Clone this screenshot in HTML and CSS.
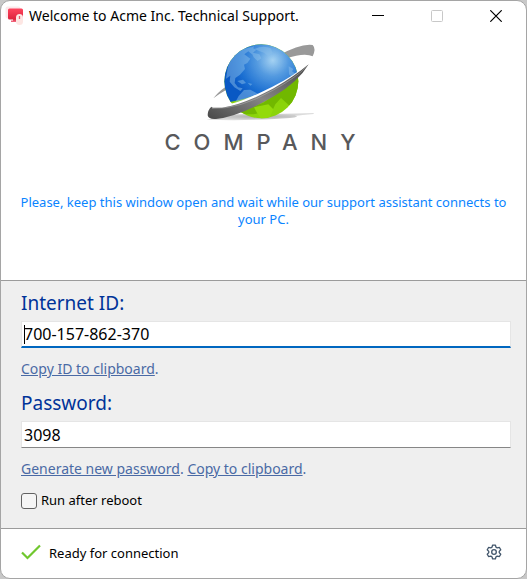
FILE: index.html
```html
<!DOCTYPE html>
<html lang="en">
<head>
<meta charset="utf-8">
<meta name="viewport" content="width=device-width, initial-scale=1">
<title>Welcome to Acme Inc. Technical Support.</title>
<link rel="stylesheet" href="styles.css">
</head>
<body>
<div class="window">
  <header class="titlebar">
    <svg class="app-icon" width="20" height="20" viewBox="0 0 20 20" aria-hidden="true">
      <defs><linearGradient id="screen" x1="0" y1="0" x2="0" y2="1"><stop offset="0" stop-color="#ff455e"/><stop offset="1" stop-color="#dc233c"/></linearGradient></defs>
      <rect x="0.5" y="0.5" width="15" height="12" rx="2" fill="#fbe9ec"/>
      <rect x="3" y="2.500" width="15" height="11" rx="1.500" fill="url(#screen)"/>
      <path d="M8 13h5v2H8z" fill="#e0304a"/>
      <rect x="6" y="14.500" width="8" height="1.500" fill="#f06078"/>
      <rect x="11" y="8" width="7" height="11" rx="3.500" fill="#fde6e3"/>
      <path d="M14.500 10v3" stroke="#e85a6c" stroke-width="1.300"/>
    </svg>
    <h1 class="title">Welcome to Acme Inc. Technical Support.</h1>
    <div class="window-buttons">
      <button type="button" aria-label="Minimize"><svg width="12" height="12" viewBox="0 0 12 12"><path d="M0 5.500h12" stroke="#000"/></svg></button>
      <button type="button" aria-label="Maximize" disabled><svg width="12" height="12" viewBox="0 0 12 12"><rect x="0.500" y="0.500" width="11" height="11" rx="1" fill="none" stroke="#c8c8c8"/></svg></button>
      <button type="button" aria-label="Close"><svg width="12" height="12" viewBox="0 0 12 12"><path d="M.3.300l11.400 11.400M11.700.300L.3 11.700" stroke="#000" stroke-width="1.200"/></svg></button>
    </div>
  </header>

  <section class="intro">
    <div class="brand">
      <svg class="globe" width="120" height="85" viewBox="0 0 360 255" aria-hidden="true">
        <defs>
          <radialGradient id="sea" gradientUnits="userSpaceOnUse" cx="218" cy="58" r="135"><stop offset="0" stop-color="#a5d2f2"/><stop offset=".35" stop-color="#559be0"/><stop offset=".75" stop-color="#1b6fd2"/><stop offset="1" stop-color="#0a58c4"/></radialGradient>
          <linearGradient id="band" x1="0" y1="1" x2="1" y2="0"><stop offset="0" stop-color="#484848"/><stop offset=".45" stop-color="#858585"/><stop offset="1" stop-color="#484848"/></linearGradient>
          <radialGradient id="shade"><stop offset="0" stop-color="#aaa"/><stop offset="1" stop-color="#ddd"/></radialGradient>
          <clipPath id="ball"><circle cx="184" cy="121" r="111"/></clipPath>
        </defs>
        <path d="M20 236Q90 215 180 220L341 216V219L285 224Q310 230 235 233Q130 240 20 236Z" fill="url(#shade)"/>
        <path d="M238 43Q300 7 338 12Q349 23 338 46Q314 34 256 53Z" fill="#999"/>
        <path d="M40 172Q53 154 77 137L78 147Q60 157 40 172Z" fill="#999"/>
        <g clip-path="url(#ball)">
          <path d="M60 0H310V255H60Z" fill="#8bd40a"/>
          <path d="M100 220L190 185L300 105V190L270 196L243 171L226 190L218 207L160 220Z" fill="#72b800"/>
          <path d="M162 199L205 190L220 205L210 228L185 236L173 219Z" fill="#93da0a"/>
          <path d="M60 0H310V85Q230 155 91 183H60Z" fill="url(#sea)"/>
          <g fill="#8cc0eb" opacity=".48">
            <path d="M83 81Q91 42 128 25L152 19L169 26L155 39L145 31L133 40L151 53L142 66L132 71L135 84L120 101L106 111L104 126L114 139L128 142L121 150L103 139L89 122L91 104L78 113Z"/>
            <path d="M164 24Q190 11 212 22L218 35L204 45L192 35L179 31Z"/>
            <path d="M145 23L162 16L158 27ZM154 34L178 40L184 52L173 60L161 49Z"/>
            <path d="M112 120L129 116L138 126L126 130ZM143 125L157 129L151 134ZM132 147L151 146L175 159L151 171L119 180L106 184L116 165Z"/>
            <path d="M266 76L280 84L276 91L288 99L281 112L267 100Z"/>
          </g>
        </g>
        <path d="M30 197Q88 199 174 158Q260 119 304 84L296 104Q212 170 100 199Q60 211 24 211Z" fill="#fff"/>
        <path d="M34 197Q36 202 66 200Q125 193 221 142Q282 107 326 70Q295 123 223 165Q120 226 48 234Q26 236 23 223Q23 207 34 197Z" fill="url(#band)"/>
        <path d="M36 202Q118 206 220 147Q288 110 321 76" fill="none" stroke="#bbb" stroke-width="2" opacity=".7"/>
      </svg>
      <div class="company">COMPANY</div>
    </div>
    <p class="message">Please, keep this window open and wait while our support assistant connects to your PC.</p>
  </section>

  <main class="panel">
    <label class="field-label" for="internet-id">Internet ID:</label>
    <input class="field active" id="internet-id" type="text" value="700-157-862-370" readonly>
    <p class="links"><a href="#copy-id">Copy ID to clipboard</a>.</p>
    <label class="field-label" for="password">Password:</label>
    <input class="field" id="password" type="text" value="3098" readonly>
    <p class="links"><a href="#generate">Generate new password</a>. <a href="#copy-password">Copy to clipboard</a>.</p>
    <label class="check" for="reboot"><input id="reboot" type="checkbox">Run after reboot</label>
  </main>

  <footer class="status">
    <svg width="20" height="16" viewBox="0 0 20 16" aria-hidden="true"><path d="M1 8.500L6.500 14L19 1.500" fill="none" stroke="#70c72e" stroke-width="2.200"/></svg>
    <span class="status-text">Ready for connection</span>
    <button class="settings" type="button" aria-label="Settings">
      <svg width="16" height="16" viewBox="0 0 18 18" fill="none" stroke="#42566b" stroke-width="1.500" stroke-linejoin="round"><path d="M7.500 1.200h3l.8 2.400 1.300.8 2.500-.5 1.500 2.600L14.900 8.300v1.400l1.700 1.800-1.500 2.600-2.500-.5-1.300.8-.8 2.400h-3l-.8-2.400-1.300-.8-2.500.5-1.500-2.600 1.700-1.800V8.300L1.400 6.500 2.900 3.900l2.500.5 1.300-.8z"/><circle cx="9" cy="9" r="2.600"/></svg>
    </button>
  </footer>
</div>
</body>
</html>
```
FILE: styles.css
```css
* { box-sizing: border-box; }

body {
  margin: 0;
  background: #c8c8c8;
  color: #000;
  font: 13px/17px "Noto Sans", "Liberation Sans", sans-serif;
}

.window {
  display: flex;
  flex-direction: column;
  min-height: 100vh;
  overflow: hidden;
  background: #fff;
  border: 1px solid #a5a5a5;
  border-radius: 10px;
}

button {
  display: grid;
  place-items: center;
  padding: 0;
  background: none;
  border: 0;
}

.titlebar {
  display: flex;
  align-items: center;
  height: 30px;
  padding: 0 1px 0 4px;
}

.title {
  margin: 0 0 0 4px;
  font: 14px/20px "Noto Sans", sans-serif;
  white-space: nowrap;
}

.window-buttons {
  display: flex;
  margin-left: auto;
}

.window-buttons button {
  width: 59px;
  height: 30px;
}

.intro {
  height: 249px;
  padding: 10px 14px 0;
  text-align: center;
}

.brand {
  display: flex;
  flex-direction: column;
  align-items: center;
  padding-right: 8px;
}

.globe { display: block; }

.company {
  padding-left: 14px;
  color: #58595b;
  font: 500 22px/32px Inter, sans-serif;
  letter-spacing: 13px;
}

.message {
  margin: 36px 0 0;
  color: #0a84ff;
}

.panel {
  display: flex;
  flex: 1;
  flex-direction: column;
  align-items: flex-start;
  padding: 8px 15px 0 20px;
  background: #efefef;
  border-top: 1px solid #9b9b9b;
  border-bottom: 1px solid #9b9b9b;
}

.field-label {
  color: #003399;
  font-size: 19px;
  line-height: 28px;
}

.field {
  width: 100%;
  height: 27px;
  margin: 4px 0 13px;
  padding: 0 2px;
  background: #fff;
  border: 1px solid #e5e5e5;
  border-bottom-color: #868686;
  border-radius: 0;
  outline: 0;
  color: #000;
  font: 16px/24px "Noto Sans", sans-serif;
}

.field.active {
  border-bottom: 2px solid #0067c0;
  background: linear-gradient(#000, #000) 2px 3px / 1px 19px no-repeat #fff;
}

.links {
  margin: 0 0 12px;
  color: #4a6aa5;
  font-size: 14px;
  line-height: 16px;
}

.links a { color: inherit; }

.check {
  display: flex;
  align-items: center;
  gap: 4px;
  margin-top: 3px;
}

.check input {
  width: 16px;
  height: 16px;
  margin: 0;
  appearance: none;
  background: #f5f5f5;
  border: 1px solid #626262;
  border-radius: 3px;
}

.check input:checked { background: #0067c0; }

.status {
  display: flex;
  align-items: center;
  height: 49px;
  padding: 0 24px 4px 20px;
}

.status-text {
  margin: 4px 0 0 8px;
}

.settings { margin-left: auto; }
```
